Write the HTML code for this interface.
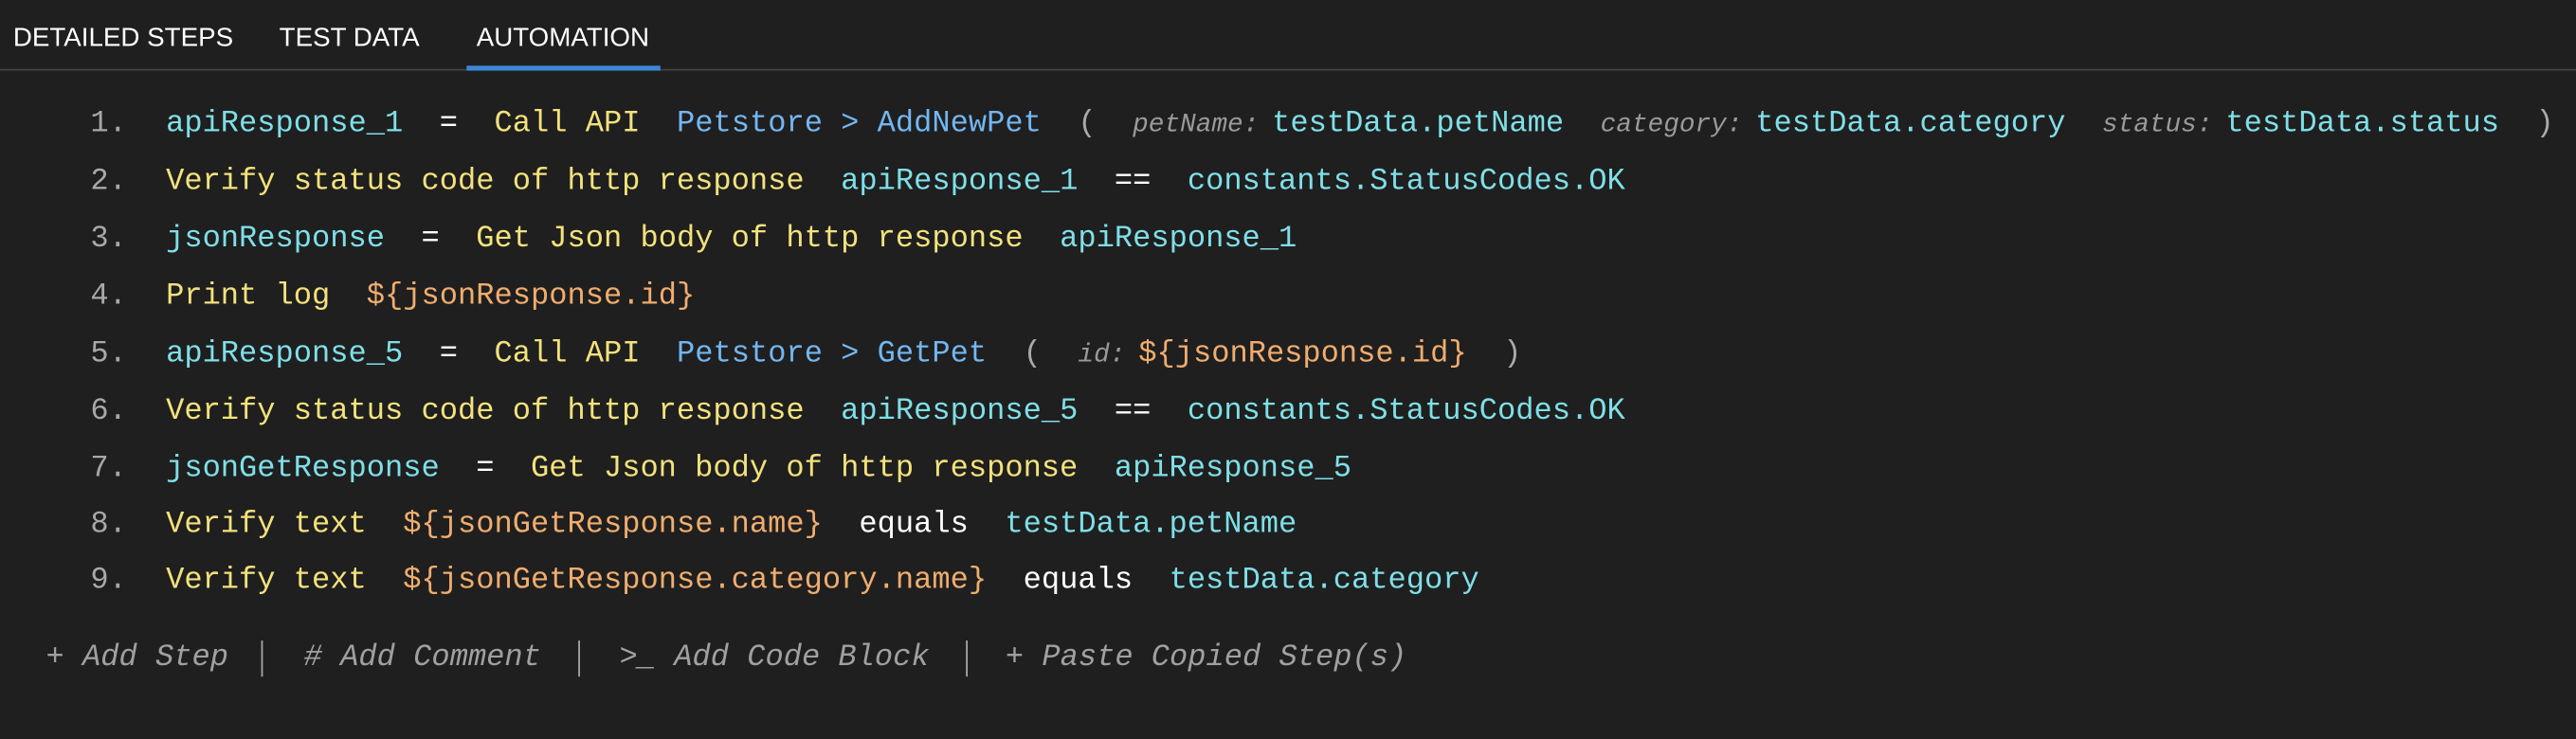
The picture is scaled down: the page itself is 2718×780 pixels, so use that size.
<!DOCTYPE html>
<html><head><meta charset="utf-8"><style>
html,body{margin:0;padding:0;background:#1f1f1f;width:2718px;height:780px;overflow:hidden}
#w{position:absolute;left:0;top:0;width:1568px;height:450px;transform:scale(1.73342);transform-origin:0 0}
.t{position:absolute;top:14px;font:16px "Liberation Sans",sans-serif;color:#fff;line-height:20px;white-space:nowrap}
.s{position:absolute;left:101px;font:18.5px "Liberation Mono",monospace;line-height:20px;white-space:pre;color:#fff}
.nn{position:absolute;left:55px;font:18.5px "Liberation Mono",monospace;line-height:20px;color:#a8a8a8}
.c{color:#7fdfe8}.y{color:#f3e27c}.b{color:#74b6f0}.o{color:#f0ad6e}.w{color:#fff}.g{color:#aaa}
i.l{font:italic 16px "Liberation Mono",monospace;color:#9a9a9a;margin-right:8px}
.f{position:absolute;top:391px;font:italic 18.5px "Liberation Mono",monospace;color:#a0a0a0;line-height:20px;white-space:pre}
.d{position:absolute;top:390px;width:1px;height:22px;background:#aaa}
</style></head><body><div id="w">
<div class="t" style="left:8px">DETAILED STEPS</div>
<div class="t" style="left:170px">TEST DATA</div>
<div class="t" style="left:290px">AUTOMATION</div>
<div style="position:absolute;left:0;top:42px;width:1568px;height:1px;background:#444"></div>
<div style="position:absolute;left:284px;top:40px;width:118px;height:3px;background:#3d86d8"></div>

<div class="nn" style="top:66px">1.</div>
<div class="s" style="top:66px"><span class="c">apiResponse_1</span>  =  <span class="y">Call API</span>  <span class="b">Petstore &gt; AddNewPet</span>  <span class="g">(</span>  <i class="l">petName:</i><span class="c">testData.petName</span>  <i class="l">category:</i><span class="c">testData.category</span>  <i class="l">status:</i><span class="c">testData.status</span>  <span class="g">)</span></div>

<div class="nn" style="top:101px">2.</div>
<div class="s" style="top:101px"><span class="y">Verify status code of http response</span>  <span class="c">apiResponse_1</span>  ==  <span class="c">constants.StatusCodes.OK</span></div>

<div class="nn" style="top:136px">3.</div>
<div class="s" style="top:136px"><span class="c">jsonResponse</span>  =  <span class="y">Get Json body of http response</span>  <span class="c">apiResponse_1</span></div>

<div class="nn" style="top:171px">4.</div>
<div class="s" style="top:171px"><span class="y">Print log</span>  <span class="o">${jsonResponse.id}</span></div>

<div class="nn" style="top:206px">5.</div>
<div class="s" style="top:206px"><span class="c">apiResponse_5</span>  =  <span class="y">Call API</span>  <span class="b">Petstore &gt; GetPet</span>  <span class="g">(</span>  <i class="l">id:</i><span class="o">${jsonResponse.id}</span>  <span class="g">)</span></div>

<div class="nn" style="top:241px">6.</div>
<div class="s" style="top:241px"><span class="y">Verify status code of http response</span>  <span class="c">apiResponse_5</span>  ==  <span class="c">constants.StatusCodes.OK</span></div>

<div class="nn" style="top:276px">7.</div>
<div class="s" style="top:276px"><span class="c">jsonGetResponse</span>  =  <span class="y">Get Json body of http response</span>  <span class="c">apiResponse_5</span></div>

<div class="nn" style="top:310px">8.</div>
<div class="s" style="top:310px"><span class="y">Verify text</span>  <span class="o">${jsonGetResponse.name}</span>  equals  <span class="c">testData.petName</span></div>

<div class="nn" style="top:344px">9.</div>
<div class="s" style="top:344px"><span class="y">Verify text</span>  <span class="o">${jsonGetResponse.category.name}</span>  equals  <span class="c">testData.category</span></div>

<div class="f" style="left:28px">+ Add Step</div>
<div class="d" style="left:159px"></div>
<div class="f" style="left:185px"># Add Comment</div>
<div class="d" style="left:352px"></div>
<div class="f" style="left:377px">&gt;_ Add Code Block</div>
<div class="d" style="left:588px"></div>
<div class="f" style="left:612px">+ Paste Copied Step(s)</div>
</div></body></html>
